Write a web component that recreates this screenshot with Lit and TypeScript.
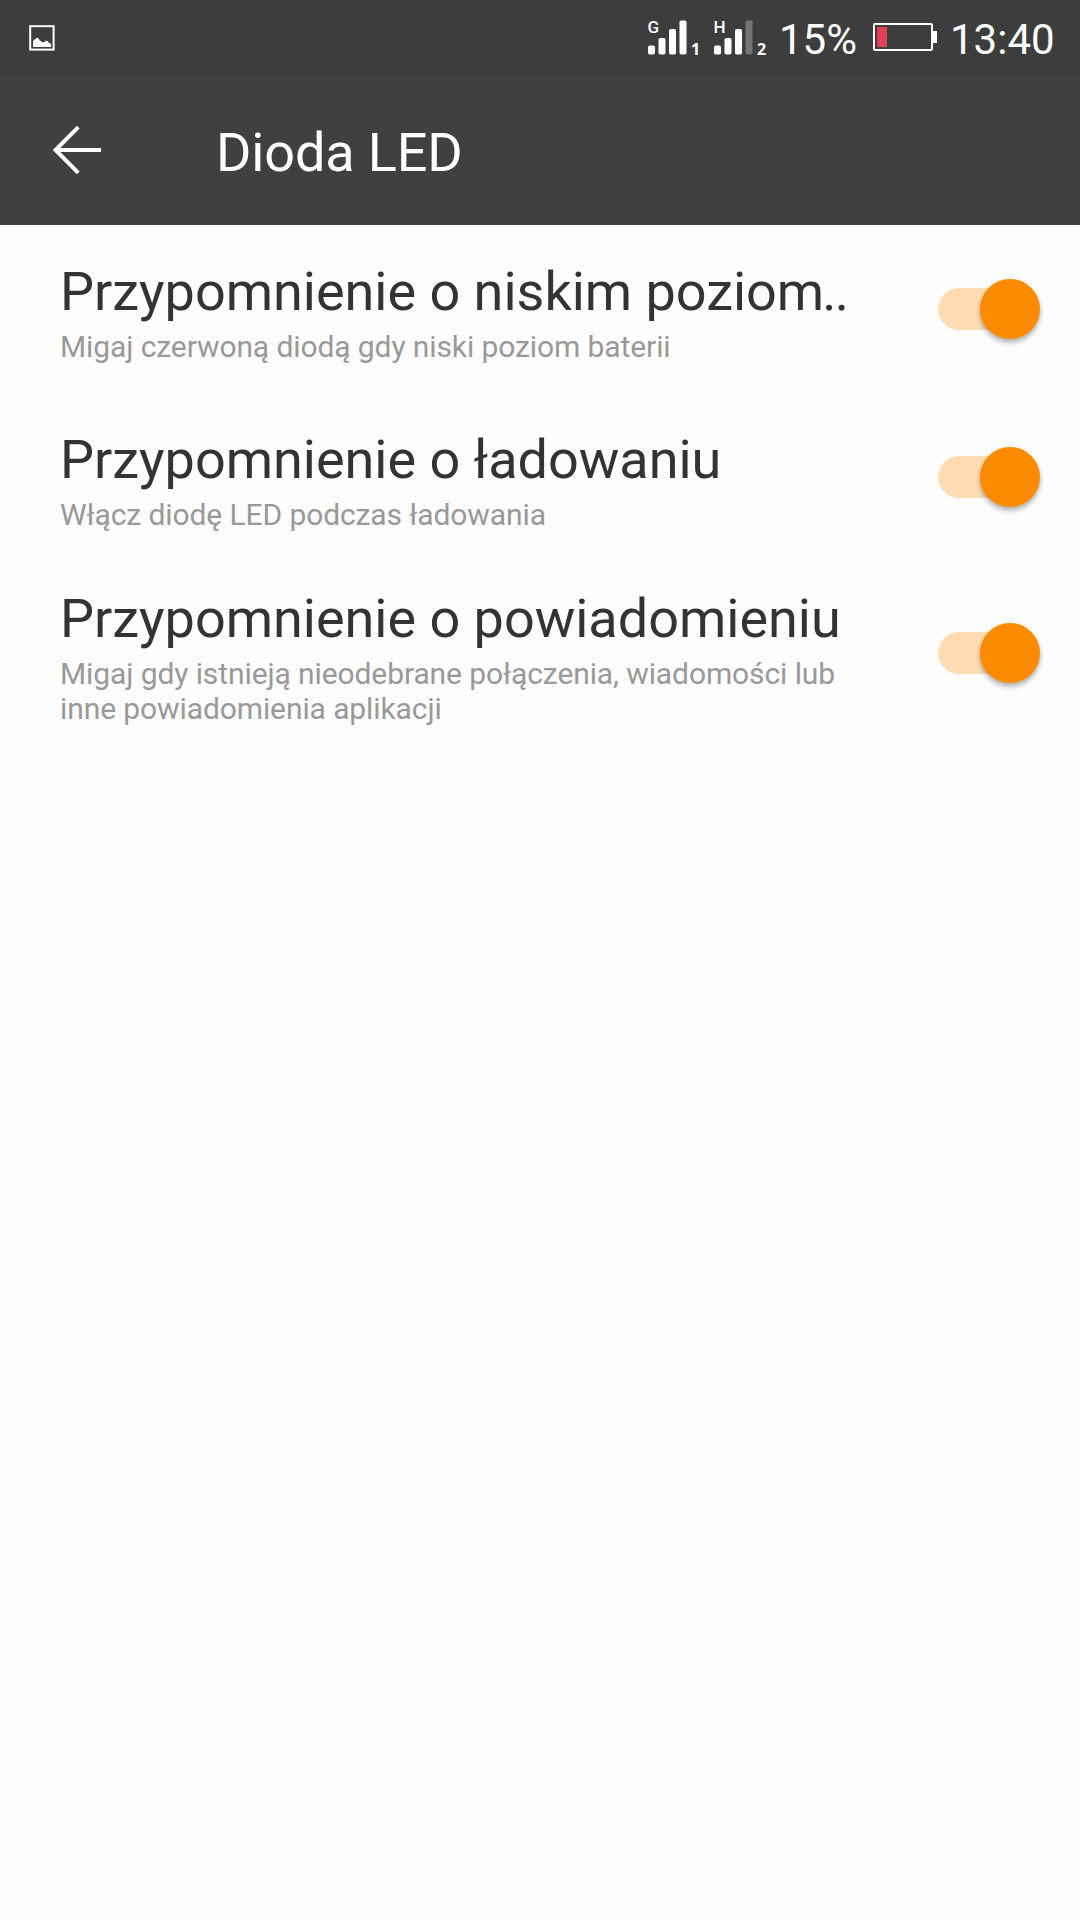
import { LitElement, html, svg, css, nothing } from "lit";
import { customElement, property, state } from "lit/decorators.js";
import { classMap } from "lit/directives/class-map.js";

@customElement("status-bar")
class StatusBar extends LitElement {
  static styles = css`
    :host {
      display: flex;
      align-items: flex-start;
      height: 75px;
      box-sizing: border-box;
      padding-left: 28px;
      background: #3d3d3d;
      color: #fff;
      font: 42px/50px Roboto, sans-serif;
    }
    .icon { display: block; flex: none; }
    .picture { margin-top: 24px; }
    .spacer { flex: 1; }
    .signal { margin-top: 15px; }
    .percent { width: 93px; margin-top: 15px; white-space: nowrap; }
    .battery { margin-top: 22px; }
    .clock { width: 130px; margin: 15px 0 0 12px; white-space: nowrap; }
    .network { font: 500 17px Roboto, sans-serif; fill: #fff; }
    .slot { font: 700 16px "Open Sans", sans-serif; fill: #fff; }
  `;

  private signal(network: string, slot: string, level: number) {
    const bars = [
      { x: 1, y: 30.5 },
      { x: 11.5, y: 23 },
      { x: 22, y: 14 },
      { x: 32.5, y: 5.5 },
    ];
    return html`<svg class="icon signal" width="66" height="45" viewBox="0 0 66 45">
      ${bars.map(
        (b, i) => svg`<rect x=${b.x} y=${b.y} width="7" height=${39.5 - b.y} rx="1.8"
          fill=${i < level ? "#fff" : "#757575"} />`
      )}
      <text class="network" x="0.5" y="17.5">${network}</text>
      <text class="slot" x="44" y="39.5">${slot}</text>
    </svg>`;
  }

  render() {
    return html`
      <svg class="icon picture" width="28" height="28" viewBox="0 0 28 28">
        <rect x="2.2" y="2.2" width="23.4" height="23.4" fill="none" stroke="#fff" stroke-width="2" />
        <path d="M5 23V17l2-2 1-.2L9 13.5l1.5 1 1.3 2 3 2 2-.7 1-1.3 2 .7L21 19l2 .8V23z" fill="#fff" />
      </svg>
      <span class="spacer"></span>
      ${this.signal("G", "1", 4)} ${this.signal("H", "2", 3)}
      <span class="percent">15%</span>
      <svg class="icon battery" width="66" height="30" viewBox="0 0 66 30">
        <rect x="2" y="2" width="58" height="26" rx="1" fill="none" stroke="#fff" stroke-width="2" />
        <rect x="60" y="9" width="5" height="12" fill="#fff" />
        <rect x="5" y="5" width="10" height="20" fill="#e24056" />
      </svg>
      <span class="clock">13:40</span>
    `;
  }
}

@customElement("toggle-switch")
class ToggleSwitch extends LitElement {
  @property({ type: Boolean }) on = false;

  static styles = css`
    :host { display: block; width: 102px; height: 60px; flex: none; }
    .track {
      display: flex;
      align-items: center;
      width: 102px;
      height: 42px;
      margin-top: 9px;
      border-radius: 21px;
      background: linear-gradient(90deg, #ddd 80px, transparent 80px);
    }
    .track.on {
      justify-content: flex-end;
      background: linear-gradient(90deg, #fedcb1 80px, transparent 80px);
    }
    .thumb {
      width: 60px;
      height: 60px;
      flex: none;
      border-radius: 50%;
      background: #f5f5f5;
      box-shadow: 0 4px 5px rgba(0, 0, 0, 0.26), 0 0 5px rgba(0, 0, 0, 0.08);
    }
    .on .thumb { background: #fb8c00; }
  `;

  render() {
    return html`<div class=${classMap({ track: true, on: this.on })}
      role="switch" aria-checked=${this.on ? "true" : "false"}>
      <div class="thumb"></div>
    </div>`;
  }
}

interface Setting {
  title: string;
  summary: string;
  on: boolean;
  truncated?: boolean;
  tall?: boolean;
}

@customElement("app-root")
class AppRoot extends LitElement {
  @state() private settings: Setting[] = [
    {
      title: "Przypomnienie o niskim poziom",
      truncated: true,
      summary: "Migaj czerwoną diodą gdy niski poziom baterii",
      on: true,
    },
    {
      title: "Przypomnienie o ładowaniu",
      summary: "Włącz diodę LED podczas ładowania",
      on: true,
    },
    {
      title: "Przypomnienie o powiadomieniu",
      summary: "Migaj gdy istnieją nieodebrane połączenia, wiadomości lub inne powiadomienia aplikacji",
      on: true,
      tall: true,
    },
  ];

  static styles = css`
    :host {
      display: block;
      min-height: 1920px;
      background: #fdfdfd;
      font-family: Roboto, sans-serif;
    }
    .header {
      display: flex;
      align-items: center;
      height: 150px;
      box-sizing: border-box;
      padding-left: 52px;
      background: #404040;
      color: #fff;
    }
    .back { display: block; flex: none; }
    .heading {
      margin: 5px 0 0 112px;
      font-size: 54px;
      line-height: 64px;
      font-weight: 400;
      letter-spacing: -0.14px;
    }
    .row {
      display: flex;
      align-items: center;
      justify-content: space-between;
      height: 168px;
      box-sizing: border-box;
      padding: 0 40.5px 2px 60px;
    }
    .row.tall { height: 184px; }
    .text { width: 800px; padding-top: 8px; }
    .title {
      font-size: 54px;
      line-height: 64px;
      letter-spacing: -0.02px;
      color: #333;
      white-space: nowrap;
    }
    .dots { margin-left: -2px; letter-spacing: -1.6px; }
    .summary {
      margin-top: 5px;
      font-size: 30px;
      line-height: 35px;
      letter-spacing: -0.1px;
      color: #999;
    }
    .toggle { margin-top: 2px; }
  `;

  render() {
    return html`
      <status-bar></status-bar>
      <header class="header">
        <svg class="back" width="52" height="52" viewBox="0 0 52 52" fill="none" stroke="#fff" stroke-width="3.9">
          <path d="M49 26H4M26.3 3.2L3.5 26 26.3 48.8" />
        </svg>
        <h1 class="heading">Dioda LED</h1>
      </header>
      <main>
        ${this.settings.map(
          (s) => html`<div class=${classMap({ row: true, tall: !!s.tall })}>
            <div class="text">
              <div class="title">${s.title}${s.truncated ? html`<span class="dots">..</span>` : nothing}</div>
              <div class="summary">${s.summary}</div>
            </div>
            <toggle-switch class="toggle" ?on=${s.on}></toggle-switch>
          </div>`
        )}
      </main>
    `;
  }
}
